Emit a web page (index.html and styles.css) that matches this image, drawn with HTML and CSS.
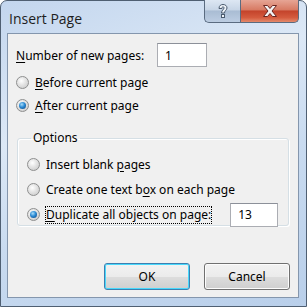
FILE: index.html
```html
<!DOCTYPE html>
<html lang="en">
<head>
  <meta charset="UTF-8" />
  <title>Insert Page</title>
  <link rel="stylesheet" href="styles.css">
</head>
<body>
  <div class="window">
    <div class="titlebar">
      <span class="title">Insert Page</span>
      <div class="caption-btns">
        <span class="cap-btn help-btn">
          <svg width="14" height="16" viewBox="0 0 14 16">
            <path d="M3 5.5 C3 2.5 5 1.5 7 1.5 C9.5 1.5 11 3 11 5 C11 7 8.5 7.5 8.5 10 L5.5 10 C5.5 7 8 6.5 8 5 C8 4 7.5 3.8 7 3.8 C6.3 3.8 6 4.3 6 5.5 Z" fill="#eef3f8" stroke="#4a5a6e" stroke-width="1"/>
            <rect x="5.5" y="11.5" width="3" height="3" fill="#eef3f8" stroke="#4a5a6e" stroke-width="1"/>
          </svg>
        </span>
        <span class="cap-btn close-btn">
          <svg width="16" height="14" viewBox="0 0 16 14">
            <path d="M1.5 1.5 H5.5 L8 4.5 L10.5 1.5 H14.5 L10 7 L14.5 12.5 H10.5 L8 9.5 L5.5 12.5 H1.5 L6 7 Z" fill="#f4f4f4" stroke="#6b2520" stroke-width="1" stroke-linejoin="round"/>
          </svg>
        </span>
      </div>
    </div>

    <div class="client">
      <div class="count-row">
        <span class="label"><u>N</u>umber of new pages:</span>
        <span class="field count-field">1</span>
      </div>

      <div class="radio-row">
        <span class="radio"></span>
        <span><u>B</u>efore current page</span>
      </div>
      <div class="radio-row">
        <span class="radio checked"></span>
        <span><u>A</u>fter current page</span>
      </div>

      <fieldset class="group">
        <legend>Options</legend>
        <div class="radio-row">
          <span class="radio"></span>
          <span>Insert blank <u>p</u>ages</span>
        </div>
        <div class="radio-row">
          <span class="radio"></span>
          <span>Create one text b<u>o</u>x on each page</span>
        </div>
        <div class="radio-row dup-row">
          <span class="radio checked"></span>
          <span class="focus"><u>D</u>uplicate all objects on page:</span>
          <span class="field dup-field">13</span>
        </div>
      </fieldset>

      <div class="buttons">
        <button class="btn default">OK</button>
        <button class="btn">Cancel</button>
      </div>
    </div>
  </div>
</body>
</html>
```

FILE: styles.css
```css
body {
  margin: 0;
  font-family: 'Noto Sans', sans-serif;
  font-size: 12px;
  color: #000;
  background: #fff;
}

.window {
  width: 307px;
  height: 307px;
  box-sizing: border-box;
  border: 1px solid #4f5f72;
  border-radius: 7px 7px 0 0;
  background: linear-gradient(160deg, #c3d6ee 0%, #dce8f6 35%, #c9dbf0 60%, #b9cfea 100%);
  padding: 0 7px 7px 6px;
}

.titlebar {
  height: 32px;
  display: flex;
  justify-content: space-between;
  align-items: flex-start;
}

.title {
  font-family: 'Open Sans', sans-serif;
  font-size: 14px;
  color: #1e1e1e;
  margin: 9px 0 0 2px;
  line-height: 18px;
}

.caption-btns {
  display: flex;
  margin-top: -1px;
}

.cap-btn {
  height: 23px;
  display: flex;
  align-items: center;
  justify-content: center;
  box-sizing: border-box;
  border: 1px solid #5a6b80;
  border-top: none;
}

.help-btn {
  width: 36px;
  border-radius: 0 0 0 5px;
  border-right: none;
  background: linear-gradient(#dde7f3 0%, #c7d5e6 45%, #a9bcd3 50%, #bccde2 100%);
}

.close-btn {
  width: 59px;
  border-radius: 0 0 5px 0;
  background: linear-gradient(#e6a595 0%, #d77a63 45%, #c4432b 50%, #d45b3e 80%, #e48a6c 100%);
}

.client {
  height: 265px;
  box-sizing: border-box;
  border: 1px solid #8496ad;
  background: #f0f0f0;
  padding: 9px 8px 0 8px;
}

u {
  text-decoration: underline;
  text-underline-offset: 2px;
}

.count-row {
  display: flex;
  align-items: center;
  height: 24px;
  margin-bottom: 4px;
}

.label {
  width: 141px;
}

.field {
  box-sizing: border-box;
  height: 24px;
  border: 1px solid #abadb3;
  border-top-color: #8c9099;
  background: #fff;
  display: flex;
  align-items: center;
  padding-left: 7px;
}

.count-field {
  width: 50px;
}

.radio-row {
  display: flex;
  align-items: center;
  height: 23px;
  gap: 6px;
}

.radio {
  width: 13px;
  height: 13px;
  box-sizing: border-box;
  border-radius: 50%;
  border: 1px solid #8e8f8f;
  background: radial-gradient(circle at 40% 35%, #ffffff 0%, #e6e6e6 40%, #c4c4c4 100%);
  position: relative;
}

.radio.checked::after {
  content: "";
  position: absolute;
  left: 2px;
  top: 2px;
  width: 7px;
  height: 7px;
  border-radius: 50%;
  background: radial-gradient(circle at 40% 35%, #a9dcf8 0%, #2a8ad4 45%, #0d3f7a 100%);
}

.group {
  margin: 13px 0 0 1px;
  width: 272px;
  height: 96px;
  box-sizing: border-box;
  border: 1px solid #d5dfe5;
  border-radius: 3px;
  box-shadow: inset 1px 1px 0 #fff, 1px 1px 0 #fff;
  padding: 6px 0 0 9px;
}

.group legend {
  padding: 0 2px;
  margin-left: 4px;
  line-height: 16px;
}

.group .radio-row {
  height: 25px;
}

.focus {
  outline: 1px dotted #000;
  outline-offset: 0;
  line-height: 16px;
}

.dup-field {
  width: 48px;
  margin-left: 13px;
}

.buttons {
  display: flex;
  justify-content: flex-end;
  gap: 14px;
  margin-top: 37px;
}

.btn {
  width: 86px;
  height: 27px;
  font-family: 'Noto Sans', sans-serif;
  font-size: 12px;
  color: #000;
  border: 1px solid #707070;
  border-radius: 3px;
  background: linear-gradient(#f2f2f2 0%, #ebebeb 50%, #dddddd 51%, #cfcfcf 100%);
  box-shadow: inset 0 0 0 1px #fcfcfc;
  padding: 0;
}

.btn.default {
  border-color: #3c7fb1;
  box-shadow: inset 0 0 0 1px #48d8fb;
}
```
